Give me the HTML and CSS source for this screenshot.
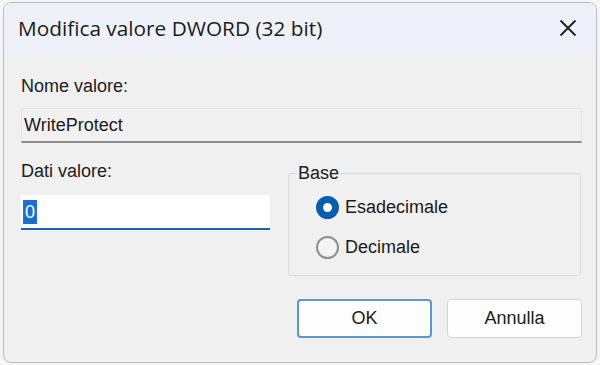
FILE: index.html
```html
<!DOCTYPE html>
<html lang="it">
<head>
    <meta charset="UTF-8">
    <title>Modifica valore DWORD (32 bit)</title>
    <link rel="stylesheet" href="styles.css">
</head>
<body>

    <div class="dialog">
        <div class="titlebar">
            <div class="title">Modifica valore DWORD (32 bit)</div>
            <svg class="close" width="18" height="18" viewBox="0 0 18 18">
                <path d="M1.5 1.5 L16.5 16.5 M16.5 1.5 L1.5 16.5" stroke="#1f1f1f" stroke-width="1.8" fill="none"/>
            </svg>
        </div>

        <div class="content">
            <div class="label">Nome valore:</div>
            <div class="field readonly">WriteProtect</div>

            <div class="lower">
                <div class="data">
                    <div class="label">Dati valore:</div>
                    <div class="field edit"><span class="selected">0</span></div>
                </div>

                <fieldset class="group">
                    <legend>Base</legend>
                    <div class="radio-row">
                        <span class="radio checked"></span>
                        <span>Esadecimale</span>
                    </div>
                    <div class="radio-row">
                        <span class="radio"></span>
                        <span>Decimale</span>
                    </div>
                </fieldset>
            </div>

            <div class="buttons">
                <button class="default">OK</button>
                <button>Annulla</button>
            </div>
        </div>
    </div>

</body>
</html>
```

FILE: styles.css
```css
* {
    box-sizing: border-box;
}

body {
    margin: 0;
    background-color: #f6f6f6;
    font-family: "Liberation Sans", Arial, sans-serif;
    color: #1a1a1a;
}

.dialog {
    width: 594px;
    height: 361px;
    margin: 2px 0 0 3px;
    background-color: #f0f0f0;
    border: 1px solid #bcbcbc;
    border-radius: 8px;
    overflow: hidden;
}

.titlebar {
    height: 51px;
    background-color: #eef2f8;
    display: flex;
    align-items: center;
    justify-content: space-between;
    padding: 0 19px 2px 14px;
}

.title {
    font-family: "Open Sans", "Noto Sans", sans-serif;
    font-size: 20.8px;
    color: #1c1c1c;
}

.content {
    padding: 22px 14px 0 17px;
}

.label {
    font-size: 18px;
    line-height: 21px;
    color: #202020;
}

.field {
    height: 35px;
    font-size: 18px;
    display: flex;
    align-items: center;
}

.field.readonly {
    margin-top: 11px;
    padding-left: 2px;
    background-color: #f1f1f1;
    border: 1px solid #e3e3e3;
    border-bottom: 2px solid #8c8c8c;
    border-radius: 3px 3px 0 0;
}

.lower {
    display: grid;
    grid-template-columns: 249px 293px;
    column-gap: 18px;
    align-items: start;
    margin-top: 18px;
}

.field.edit {
    margin-top: 13px;
    padding-left: 2px;
    background-color: #ffffff;
    border-bottom: 2px solid #1a64b4;
}

.selected {
    background-color: #1a6fd0;
    color: #ffffff;
    padding: 3px 2px;
    line-height: 18px;
}

.group {
    margin: 2px 0 0 0;
    padding: 3px 0 8px 27px;
    border: 1px solid #d9d9d9;
    border-radius: 3px;
    min-width: 0;
}

.group legend {
    font-size: 18px;
    line-height: 21px;
    padding: 0 1px;
    margin-left: -19px;
    color: #202020;
}

.radio-row {
    display: flex;
    align-items: center;
    gap: 6px;
    height: 40px;
    font-size: 18px;
}

.radio {
    width: 23px;
    height: 23px;
    border-radius: 50%;
    border: 2px solid #8e8e8e;
    background-color: #f4f4f4;
}

.radio.checked {
    border: 7px solid #0a5cb0;
    background-color: #ffffff;
}

.buttons {
    display: flex;
    justify-content: flex-end;
    gap: 15px;
    margin-top: 23px;
}

.buttons button {
    width: 135px;
    height: 39px;
    font-family: "Liberation Sans", Arial, sans-serif;
    font-size: 18px;
    color: #1a1a1a;
    background-color: #fdfdfd;
    border: 1px solid #d2d2d2;
    border-radius: 4px;
}

.buttons button.default {
    border: 2px solid #5c96cf;
}
```
